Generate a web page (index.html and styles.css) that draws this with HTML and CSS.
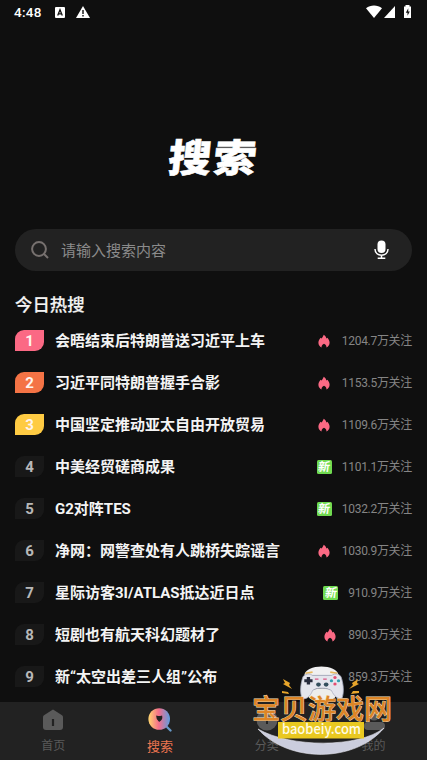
FILE: index.html
```
<!DOCTYPE html>
<html lang="zh-CN">
<head>
<meta charset="utf-8">
<title>搜索</title>
<link rel="stylesheet" href="styles.css">
</head>
<body>
<svg class="defs" width="0" height="0">
  <symbol id="fire" viewBox="0 0 12 14"><path fill="#fb6984" d="M5.700.8C7.200 1.700 8 2.900 8.400 4.600l1-.8c1.400 1.600 2.200 3.200 2.200 4.900 0 2.200-1.200 3.900-3.200 4.700.3-1.400-.4-2.700-2.400-3.700-2 1-2.700 2.300-2.400 3.700C1.600 12.600.4 10.900.4 8.700c0-1.700.8-3.300 2.200-4.900l1 .8C4.300 3.400 5.300 2.200 5.700.8z"/></symbol>
</svg>
<div class="screen">
  <header class="status">
    <span class="clock">4:48</span>
    <svg class="s-a" width="10" height="11" viewBox="0 0 10 11"><rect width="10" height="11" rx="1" fill="#fff"/><path d="M2.700 8.500 5 2.700l2.300 5.800M3.500 6.800h3" fill="none" stroke="#111" stroke-width="1.300"/></svg>
    <svg class="s-w" width="14" height="12" viewBox="0 0 14 12"><path d="M7 0l7 12H0z" fill="#fff"/><path d="M7 4v4M7 9v1.500" stroke="#111" stroke-width="1.400"/></svg>
    <svg class="s-r" width="46" height="14" viewBox="0 0 46 14"><path d="M0 3.300C4.500-.3 11.500-.3 16 3.300L8 13z" fill="#fff"/><path d="M29 1v12H18z" fill="#fff"/><path d="M39.500 1.500V0h4v1.500H45V13h-7V1.500z" fill="#fff"/><path d="M42.300 3.300 39.800 7.800h1.700v3l2.300-4.300h-1.600z" fill="#111"/></svg>
  </header>
  <h1 class="logo">搜索</h1>
  <div class="search">
    <svg width="18" height="18" viewBox="0 0 18 18" fill="none" stroke="#77716f" stroke-width="2"><circle cx="8" cy="8" r="6.900"/><path d="M12.500 12.500l4.500 4.500"/></svg>
    <span class="hint">请输入搜索内容</span>
    <svg width="15" height="20" viewBox="0 0 15 20" fill="none" stroke="#fff" stroke-width="1.500"><rect x="3.500" y=".5" width="8" height="12.500" rx="4" fill="#fff" stroke="none"/><path d="M1 9c0 8.200 13 8.200 13 0M7.500 15v3M3.700 18.300h7.600"/></svg>
  </div>
  <h2 class="heading">今日热搜</h2>
  <ol class="list">
    <li><span class="rank r1">1</span><span class="topic">会晤结束后特朗普送习近平上车</span><svg class="fire"><use href="#fire"/></svg><span class="count">1204.7万关注</span></li>
    <li><span class="rank r2">2</span><span class="topic">习近平同特朗普握手合影</span><svg class="fire"><use href="#fire"/></svg><span class="count">1153.5万关注</span></li>
    <li><span class="rank r3">3</span><span class="topic">中国坚定推动亚太自由开放贸易</span><svg class="fire"><use href="#fire"/></svg><span class="count">1109.6万关注</span></li>
    <li><span class="rank">4</span><span class="topic">中美经贸磋商成果</span><span class="new"><b>新</b></span><span class="count">1101.1万关注</span></li>
    <li><span class="rank">5</span><span class="topic">G2对阵TES</span><span class="new"><b>新</b></span><span class="count">1032.2万关注</span></li>
    <li><span class="rank">6</span><span class="topic">净网：网警查处有人跳桥失踪谣言</span><svg class="fire"><use href="#fire"/></svg><span class="count">1030.9万关注</span></li>
    <li><span class="rank">7</span><span class="topic">星际访客3I/ATLAS抵达近日点</span><span class="new"><b>新</b></span><span class="count">910.9万关注</span></li>
    <li><span class="rank">8</span><span class="topic">短剧也有航天科幻题材了</span><svg class="fire"><use href="#fire"/></svg><span class="count">890.3万关注</span></li>
    <li><span class="rank">9</span><span class="topic">新“太空出差三人组”公布</span><span class="count">859.3万关注</span></li>
  </ol>
  <nav class="tabs">
    <div class="tab"><svg width="22" height="22" viewBox="0 0 22 22"><path d="M11 .5 20 6.300q1 .7 1 2V18q0 3-3 3H4q-3 0-3-3V8.300q0-1.300 1-2z" fill="#5a5a5a"/><path d="M11 10v7" stroke="#222" stroke-width="2.200"/></svg><span>首页</span></div>
    <div class="tab on"><svg width="24" height="24" viewBox="0 0 24 24"><defs><linearGradient id="g"><stop offset="0" stop-color="#ffd66e"/><stop offset=".48" stop-color="#f46e8b"/><stop offset="1" stop-color="#5d9de0"/></linearGradient></defs><path d="M18.500 18.500l4 4" stroke="#6799c8" stroke-width="2.300" stroke-linecap="round"/><circle cx="11.200" cy="11" r="10.800" fill="url(#g)"/><path d="M9 8.500q2 .7 4.500 0 .6 3-2.300 4.500-2.200-1.500-2.200-4.500z" fill="#222" stroke="#222" stroke-width="1.500"/></svg><span>搜索</span></div>
    <div class="tab"><svg width="22" height="22" viewBox="0 0 22 22"><circle cx="11" cy="11" r="10.500" fill="#5a5a5a"/><path d="M11 8v7" stroke="#222" stroke-width="2"/></svg><span>分类</span></div>
    <div class="tab"><svg width="24" height="22" viewBox="0 0 24 22"><circle cx="12" cy="6" r="5.500" fill="#5a5a5a"/><rect x="2" y="13" width="21" height="8" rx="4" fill="#5a5a5a"/></svg><span>我的</span></div>
  </nav>
  <svg class="mark" width="187" height="110" viewBox="0 0 187 110">
    <path d="M18 79C48 113 115 113 144 78 119 98 51 98 18 79z" fill="#cbcddd" stroke="#e5e5ef" stroke-width=".6"/>
    <g transform="translate(82 34) scale(1.180 1.080) translate(-81 -35)">
    <path d="M66 27C67 16 94 16 95 27z" fill="#f0f0f1"/>
    <path d="M67 25l6-1M88 24l6 1" stroke="#e8b85c" stroke-width="1.500"/>
    <ellipse cx="81" cy="45" rx="12" ry="6" fill="#eeeeec"/>
    <path d="M65 28Q69 24 73 27h16q5-3 8 1c2 6 3 14 1 20-3 2-7-2-9-7-5-3-12-3-16 0-2 6-6 9-9 7-2-6-1-14 1-20z" fill="#e4e5ed" stroke="#aaaec1" stroke-width=".7"/>
    <path d="M66 32h7M69.500 28.500v7" stroke="#272b3c" stroke-width="2.800"/>
    <g fill="#334e5d"><circle cx="78" cy="35.500" r="2"/><circle cx="84.500" cy="35.500" r="2"/></g>
    <path d="M75 30.500h3M82 30.500h3" stroke="#d95483"/>
    <g fill="#e54e72"><circle cx="92" cy="29" r="1.400"/><circle cx="92" cy="35" r="1.400"/></g><g fill="#319eaf"><circle cx="89" cy="32" r="1.400"/><circle cx="95" cy="32" r="1.400"/></g>
    </g>
    <g fill="#e7a52b"><path d="M43 29l7 4-1 2 3 4-9-5 2-1zM42 41l6 1 1 2-7-1zM118 29l-6 4 1 2-4 4 10-5-2-1zM119 41l-6 0-2 3 8-1z"/></g>
    <text class="mark-cn" x="12" y="68.500" textLength="140" lengthAdjust="spacingAndGlyphs">宝贝游戏网</text>
    <rect x="38" y="72" width="86" height="16.500" fill="#e9c820"/>
    <text class="mark-url" x="42" y="84" textLength="79" lengthAdjust="spacingAndGlyphs">baobeiy.com</text>
  </svg>
</div>
</body>
</html>
```
FILE: styles.css
```
* { box-sizing: border-box; margin: 0; padding: 0; }
body { background: #0f0f0f; font-family: Roboto, "Noto Sans CJK SC", sans-serif; color: #f4f4f4; }
svg { display: block; flex: none; }
.defs { position: absolute; }
.screen { position: relative; width: 427px; height: 760px; overflow: hidden; display: flex; flex-direction: column; }
.status { height: 26px; padding: 0 15px 2px 14px; display: flex; align-items: center; }
.clock { width: 41px; font-size: 13.500px; font-weight: 500; letter-spacing: .3px; color: #fff; }
.s-w { margin-left: 11px; }
.s-r { margin-left: auto; }
.logo { margin-top: 105px; height: 54px; line-height: 54px; text-align: center; font-size: 43px; font-weight: 900; letter-spacing: 2px; color: #fff; -webkit-text-stroke: .6px #fff; transform: skewX(-6deg) scaleY(.9); }
.search { margin: 44px 15px 0; height: 42px; padding: 0 23px 0 16px; border-radius: 21px; background: #222; display: flex; align-items: center; }
.hint { flex: 1; margin-left: 12px; padding-bottom: 2px; font-size: 15px; color: #8b8b8b; }
.heading { margin: 20px 15px 0; height: 29px; line-height: 28px; font-size: 17.400px; font-weight: 500; -webkit-text-stroke: .2px #f4f4f4; }
.list { list-style: none; height: 382px; padding: 0 15px; overflow: hidden; }
.list li { height: 42px; display: flex; align-items: center; }
.rank { width: 29px; height: 21px; margin-bottom: 1px; border-radius: 9px 0 9px 0; background: #181818; color: #b8b8b8; text-align: center; font-size: 15px; line-height: 22px; font-weight: 700; }
.r1, .r2, .r3 { color: #fff4ee; }
.r1 { background: #fb6984; }
.r2 { background: #f47345; }
.r3 { background: #ffcb43; }
.topic { flex: 1; margin-left: 11px; padding-bottom: 3px; font-size: 15px; font-weight: 700; white-space: nowrap; }
.fire { width: 12px; height: 14px; }
.count { margin-left: 12px; padding-bottom: 3px; font-size: 12px; letter-spacing: -.3px; color: #858585; white-space: nowrap; }
.new { width: 15px; height: 14px; border-radius: 1.500px; background: #70da50; display: flex; align-items: center; justify-content: center; margin-right: -2px; }
.new b { font-size: 12px; line-height: 14px; font-weight: 700; color: #fff; transform: skewX(-8deg); }
.tabs { height: 58px; background: #222; display: grid; grid-template-columns: repeat(4, 1fr); }
.tab { display: flex; flex-direction: column; align-items: center; padding-top: 6px; font-size: 12px; color: #5a5a5a; }
.tab svg { height: 24px; }
.tab span { line-height: 18px; margin-top: 5px; }
.tab.on { color: #ed7550; font-size: 13px; }
.tab.on span { margin-top: 6px; }
.mark { position: absolute; left: 240px; top: 650px; }
.mark-cn { font: 500 27px "Noto Sans CJK SC", sans-serif; fill: #dd8526; stroke: #f5dfb8; stroke-width: .9px; paint-order: stroke; }
.mark-url { font: 500 14px "Noto Sans CJK SC", sans-serif; fill: #fffbe5; }
```
